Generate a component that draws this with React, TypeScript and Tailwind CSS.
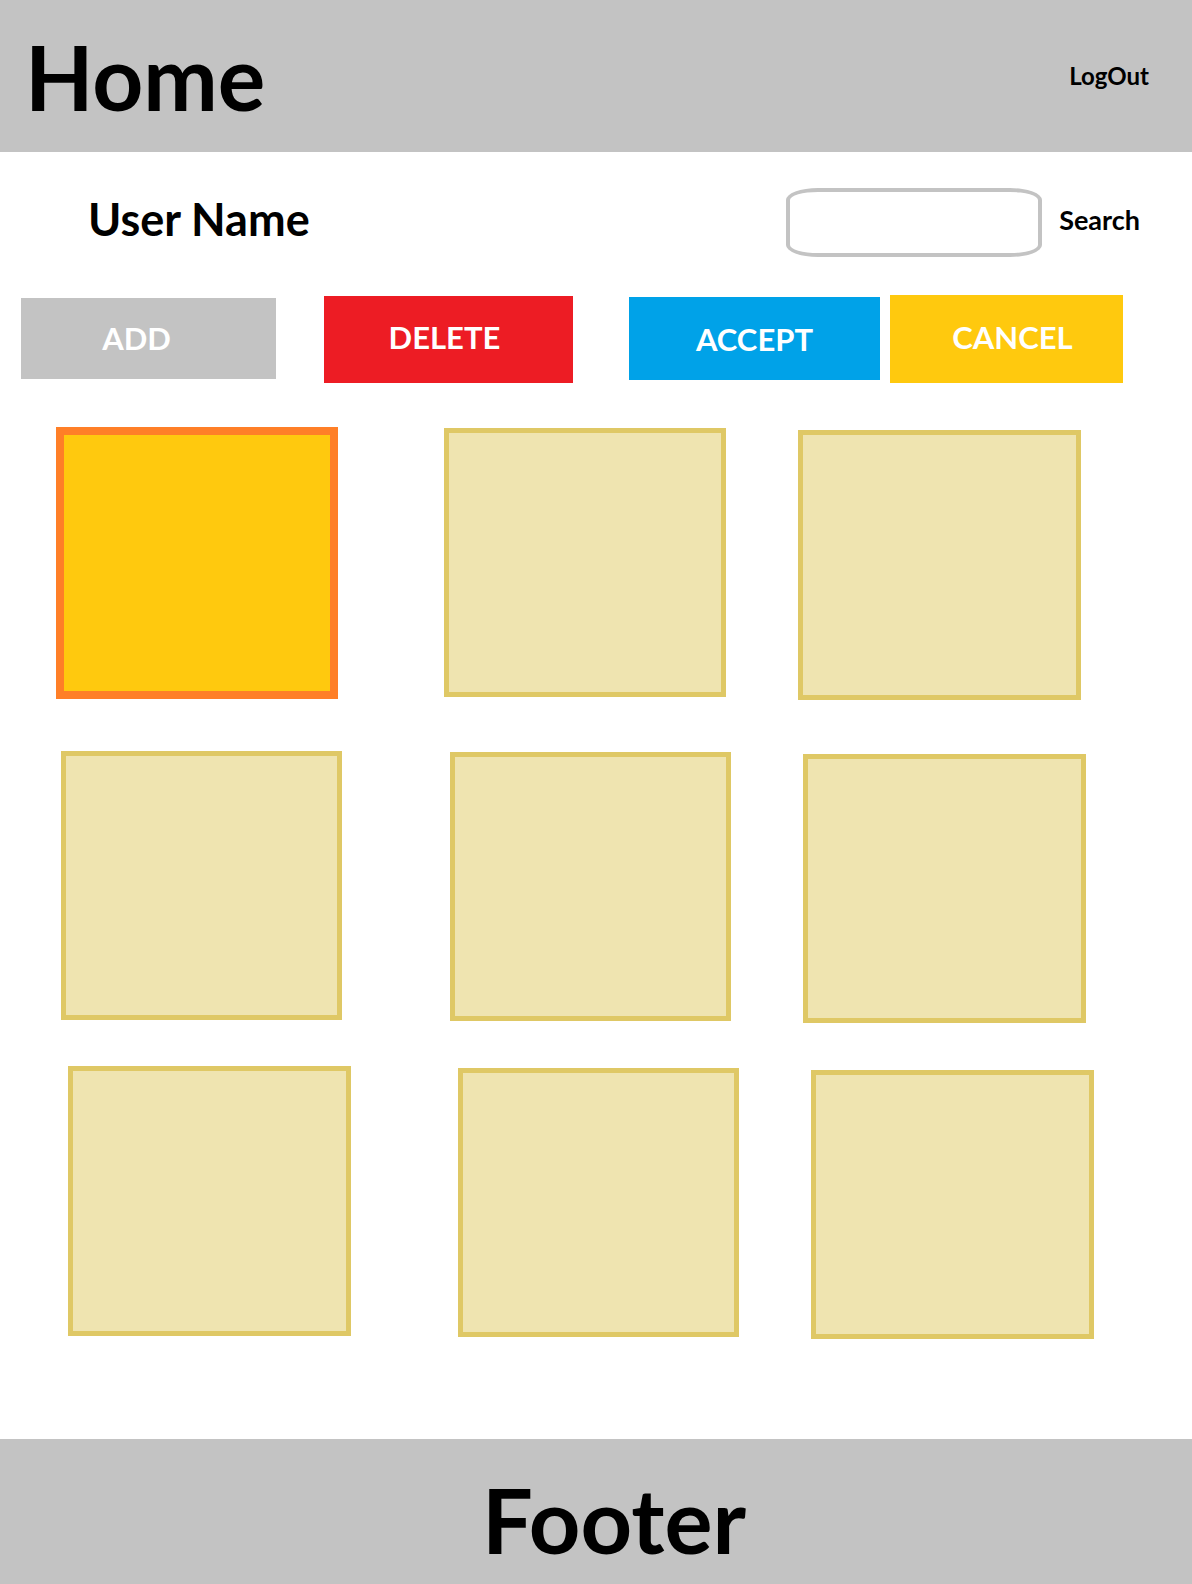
import React from 'react';

const font = { fontFamily: 'Lato, "Open Sans", sans-serif' };

interface TileProps {
    className: string;
    selected?: boolean;
}

const Tile: React.FC<TileProps> = ({ className, selected }) => (
    <div
        className={
            selected
                ? `shrink-0 border-[8px] border-[#ff7f27] bg-[#ffc90e] ${className}`
                : `shrink-0 border-[5px] border-[#dfc865] bg-[#efe4b0] ${className}`
        }
    />
);

export default function App() {
    return (
        <div className="min-h-screen w-[1192px] flex flex-col bg-white text-black font-bold" style={font}>
            {/* header */}
            <header className="h-[152px] bg-[#c3c3c3] flex items-center justify-between pl-[25px] pr-[43px]">
                <h1 className="text-[89px] leading-none font-bold">Home</h1>
                <button className="text-[24px] leading-none font-bold">LogOut</button>
            </header>

            <main className="flex-1 flex flex-col">
                {/* user row */}
                <div className="mt-[36px] h-[69px] flex items-center pl-[88px] pr-[51px]">
                    <span className="text-[45px] leading-none mb-[7px]">User Name</span>
                    <div className="flex-1" />
                    <input
                        type="text"
                        className="w-[256px] h-[69px] border-[4px] border-[#c3c3c3] rounded-[32px/12px] outline-none px-4"
                    />
                    <span className="ml-[17px] mr-[1px] text-[27px] leading-none mb-[6px]">Search</span>
                </div>

                {/* action buttons */}
                <div className="mt-[38px] flex items-start text-white text-[31px] leading-none">
                    <button className="ml-[21px] mt-[3px] w-[255px] h-[81px] bg-[#c3c3c3] flex items-center justify-center pr-[24px]">
                        ADD
                    </button>
                    <button className="ml-[48px] mt-[1px] w-[249px] h-[87px] bg-[#ed1c24] flex items-center justify-center pr-[8px] pb-[4px]">
                        DELETE
                    </button>
                    <button className="ml-[56px] mt-[2px] w-[251px] h-[83px] bg-[#00a2e8] flex items-center justify-center pt-[2px]">
                        ACCEPT
                    </button>
                    <button className="ml-[10px] w-[233px] h-[88px] bg-[#ffc90e] flex items-center justify-center pl-[12px] pb-[4px]">
                        CANCEL
                    </button>
                </div>

                {/* tiles */}
                <div className="mt-[44px] flex items-start">
                    <Tile selected className="ml-[56px] w-[282px] h-[272px]" />
                    <Tile className="ml-[106px] mt-[1px] w-[282px] h-[269px]" />
                    <Tile className="ml-[72px] mt-[3px] w-[283px] h-[270px]" />
                </div>
                <div className="mt-[51px] flex items-start">
                    <Tile className="ml-[61px] w-[281px] h-[269px]" />
                    <Tile className="ml-[108px] mt-[1px] w-[281px] h-[269px]" />
                    <Tile className="ml-[72px] mt-[3px] w-[283px] h-[269px]" />
                </div>
                <div className="mt-[43px] flex items-start">
                    <Tile className="ml-[68px] w-[283px] h-[270px]" />
                    <Tile className="ml-[107px] mt-[2px] w-[281px] h-[269px]" />
                    <Tile className="ml-[72px] mt-[4px] w-[283px] h-[269px]" />
                </div>
            </main>

            {/* footer */}
            <footer className="h-[145px] bg-[#c3c3c3] flex items-center justify-center pl-[36px] pt-[14px]">
                <span className="text-[90px] leading-none">Footer</span>
            </footer>
        </div>
    );
}
